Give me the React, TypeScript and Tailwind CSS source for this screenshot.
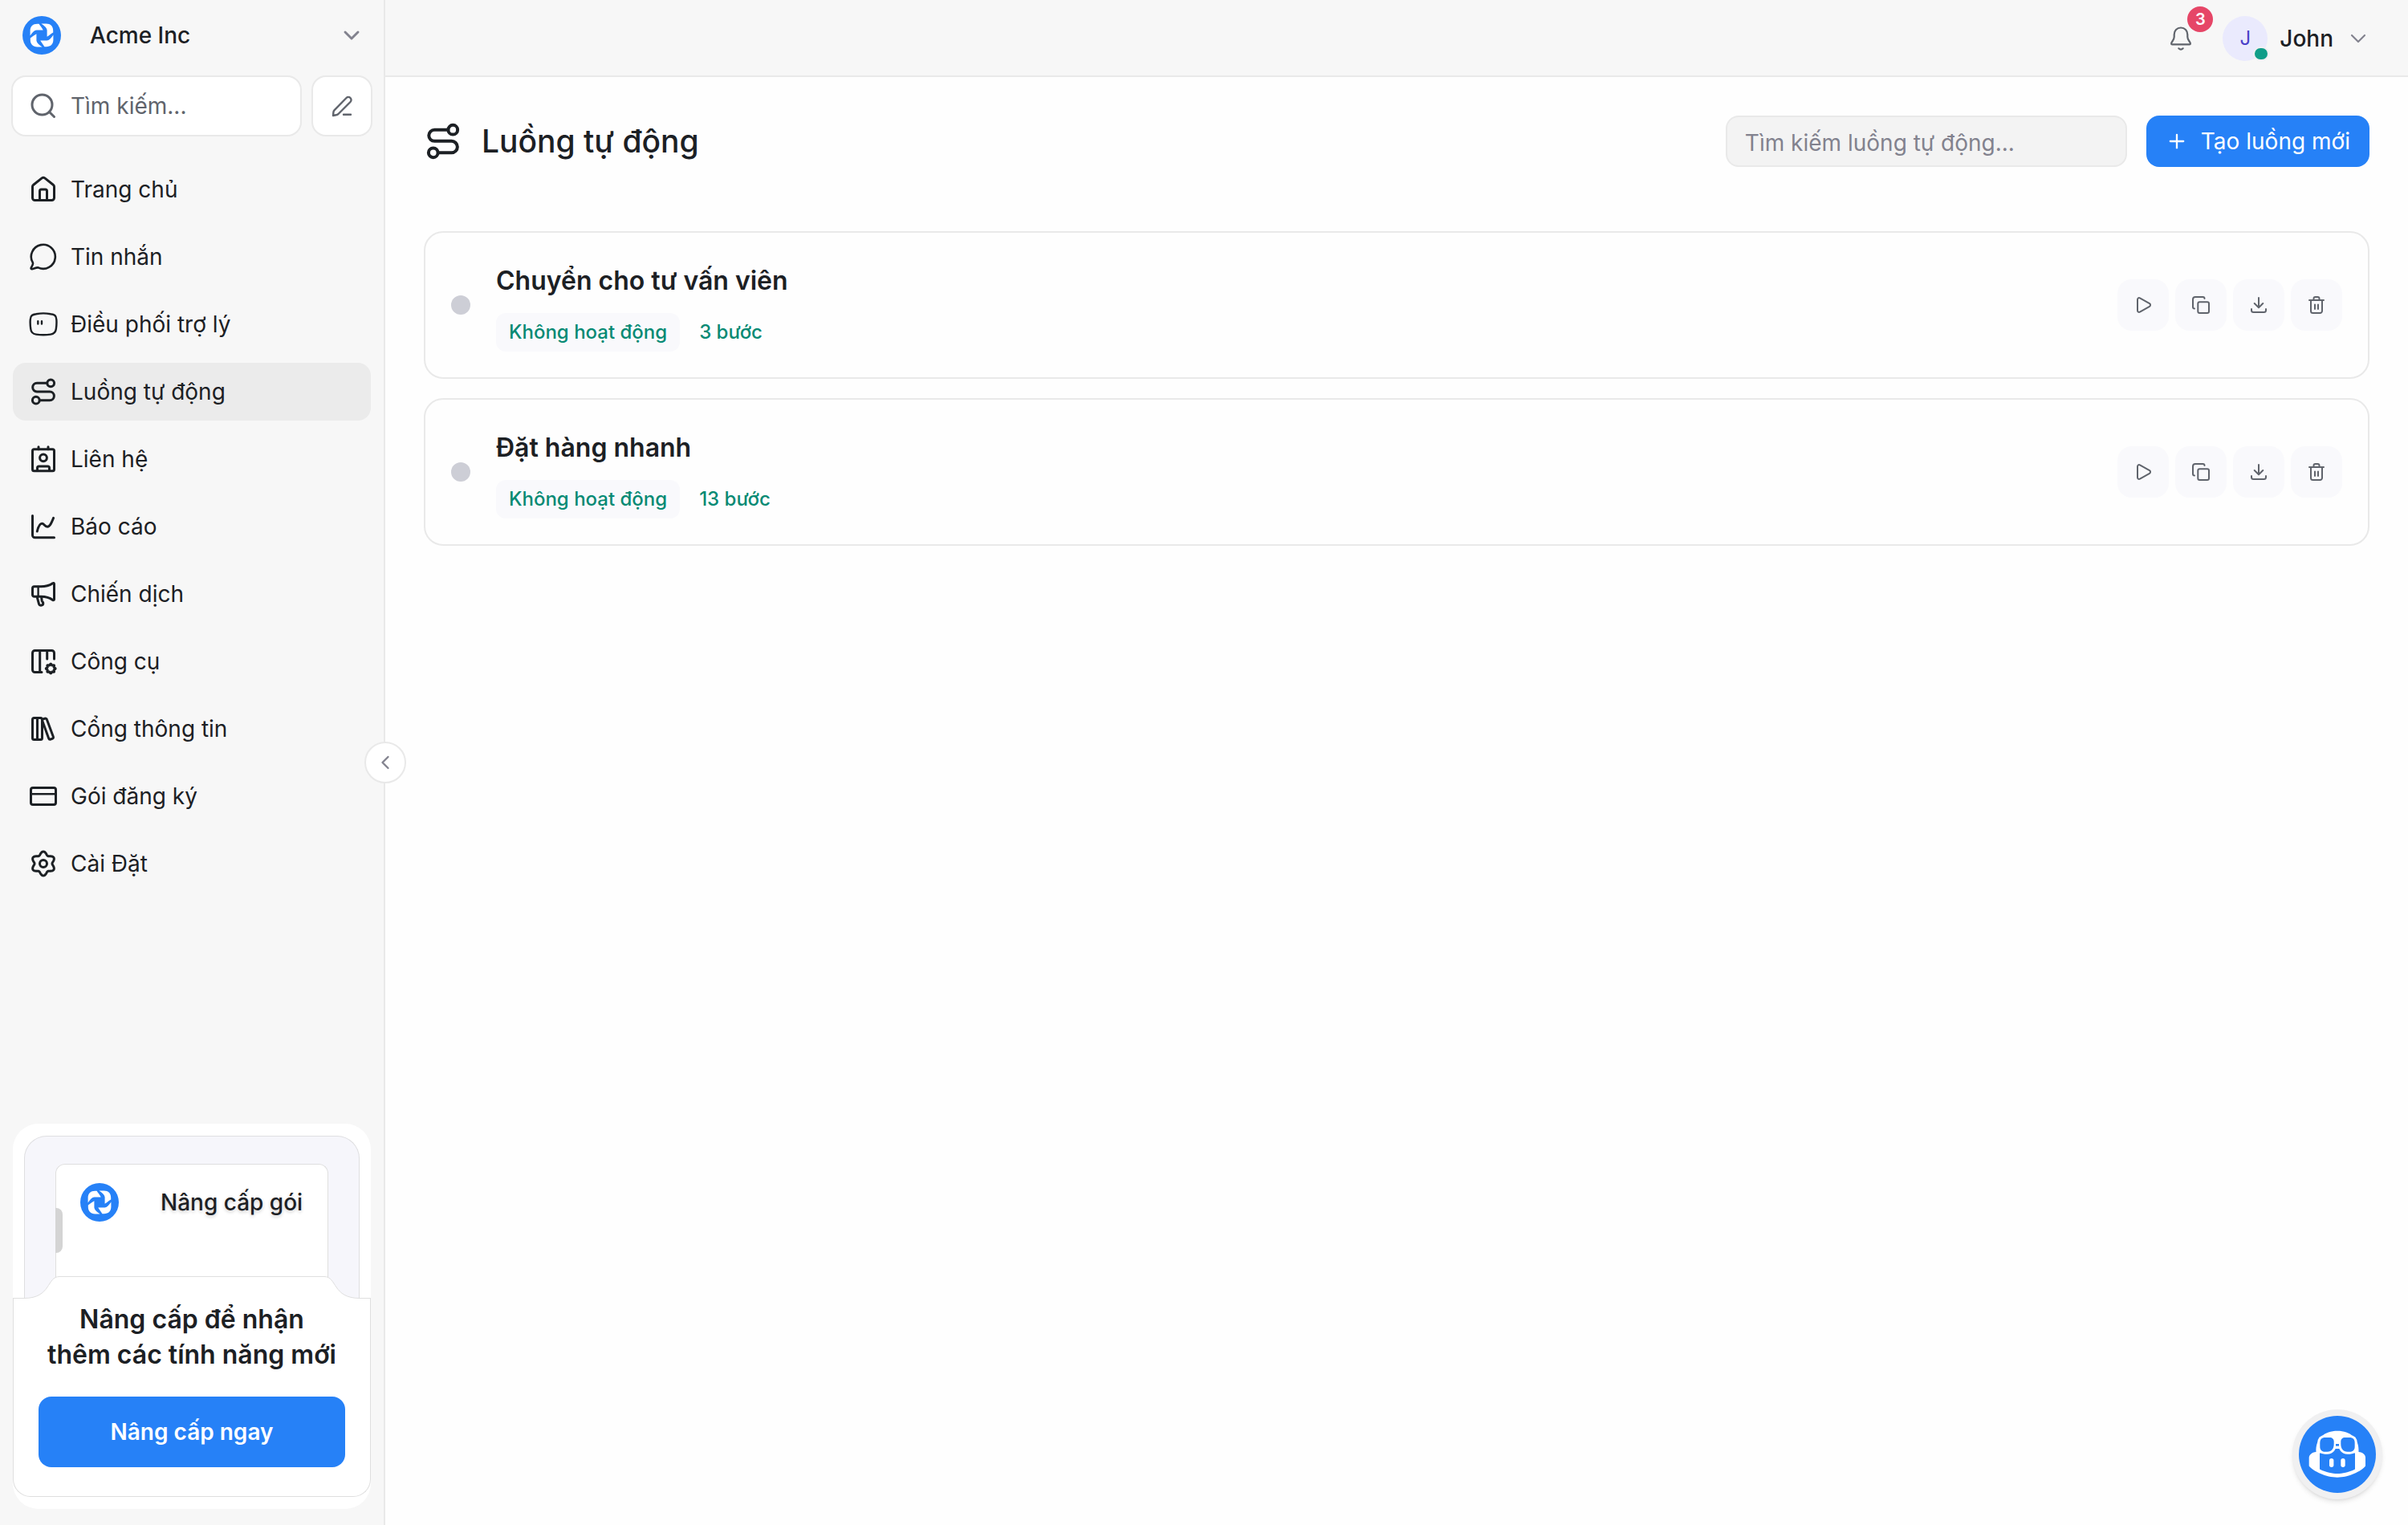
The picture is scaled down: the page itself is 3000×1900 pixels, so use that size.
import type { ReactNode } from "react";
import { ChevronDown, ChevronLeft, Plus } from "lucide-react";

// closed polar curve with n rounded teeth, used for the gear icons
function gearPath(cx: number, cy: number, r: number, amp: number, n: number) {
  const pts: string[] = [];
  for (let i = 0; i < 120; i++) {
    const a = (i / 120) * Math.PI * 2 - Math.PI / 2;
    const rr = r + amp * Math.cos(n * (a + Math.PI / 2));
    pts.push((cx + rr * Math.cos(a)).toFixed(2) + " " + (cy + rr * Math.sin(a)).toFixed(2));
  }
  return "M" + pts.join("L") + "Z";
}

function NavIcon({ children, className = "size-9" }: { children: ReactNode; className?: string }) {
  return (
    <svg viewBox="0 0 36 36" className={className + " shrink-0"} fill="none" stroke="currentColor" strokeWidth="3" strokeLinecap="round" strokeLinejoin="round" aria-hidden="true">
      {children}
    </svg>
  );
}

function ActionIcon({ children }: { children: ReactNode }) {
  return (
    <svg viewBox="0 0 28 28" className="size-7" fill="none" stroke="currentColor" strokeWidth="2" strokeLinecap="round" strokeLinejoin="round" aria-hidden="true">
      {children}
    </svg>
  );
}

const routeShape = (
  <>
    <circle cx="27.2" cy="7.3" r="4.4" />
    <circle cx="8.8" cy="28.7" r="4.4" />
    <path d="M22.7 7.3H10a5.25 5.25 0 0 0 0 10.6h16a5.4 5.4 0 0 1 0 10.8H13.4" />
  </>
);

const nav = [
  {
    label: "Trang chủ",
    icon: (
      <>
        <path d="M4.5 14.5a3 3 0 0 1 1.2-2.3L16.2 3.9a3 3 0 0 1 3.6 0l10.5 8.3a3 3 0 0 1 1.2 2.3v14a3 3 0 0 1-3 3h-21a3 3 0 0 1-3-3Z" />
        <path d="M13.5 31.5V20a2 2 0 0 1 2-2h5a2 2 0 0 1 2 2v11.5" />
      </>
    ),
  },
  {
    label: "Tin nhắn",
    icon: <path strokeWidth="2.6" d="M4.9 25.4A15 15 0 1 1 11.5 31.4C9 31.2 6 32.8 3.8 33.2C2.9 33.3 2.4 32.5 2.8 31.6C3.7 29.7 5.6 27.5 4.9 25.4Z" />,
  },
  {
    label: "Điều phối trợ lý",
    icon: (
      <g strokeWidth="2.4">
        <path d="M9 5.3C14 4.3 22 4.3 27 5.3C32 6 34 7 34.3 12C34.6 15 34.4 20 33.8 24C33.3 28.3 31 30 27 30.6C22 31.4 14 31.4 9 30.6C5 30 2.7 28.3 2.3 24C1.7 20 1.5 15 1.8 12C2.1 7 4.3 6 9 5.3Z" />
        <path d="M11.3 14.2v3.4M16 14.2v3.4" />
      </g>
    ),
  },
  { label: "Luồng tự động", icon: routeShape, active: true },
  {
    label: "Liên hệ",
    icon: (
      <>
        <rect x="4.5" y="5.8" width="27" height="27" rx="2" />
        <path d="M12 2.8v3M24 2.8v3M10.5 32.5V29a2 2 0 0 1 2-2h11a2 2 0 0 1 2 2v3.5" />
        <circle cx="18" cy="16.3" r="4.4" />
      </>
    ),
  },
  {
    label: "Báo cáo",
    icon: (
      <>
        <path d="M4.5 4.5v24.2a3 3 0 0 0 3 3h24" />
        <path d="M10.3 24C11.5 19 13.5 14.3 16.3 14.3C19 14.3 19.5 18.3 23 18.3C26.5 18.3 28.5 12.5 30.6 7.4" />
      </>
    ),
  },
  {
    label: "Chiến dịch",
    icon: (
      <>
        <path d="M6.8 8.8H15c7 0 11-1.6 14.6-4.1c.9-.6 1.9-.2 1.9.8v19.2c0 1-1 1.4-1.9.8C26 22.7 22 21.3 15 21.3H6.8a2.3 2.3 0 0 1-2.3-2.3v-7.9a2.3 2.3 0 0 1 2.3-2.3Z" />
        <path strokeWidth="2.4" d="M11.6 9v12" />
        <path d="M10.2 21.8l2.3 8.6a2.7 2.7 0 0 0 5.2-1.4c-.3-1-1.4-1.6-1.6-2.8l-.5-4.6" />
      </>
    ),
  },
  {
    label: "Công cụ",
    icon: (
      <>
        <path d="M16 31.5H7.5a3 3 0 0 1-3-3v-21a3 3 0 0 1 3-3h21a3 3 0 0 1 3 3V15M13.7 4.8v26.5M22.7 4.8V15" />
        <path strokeWidth="2.8" d={gearPath(27.2, 27, 5.1, 0.9, 8)} />
      </>
    ),
  },
  {
    label: "Cổng thông tin",
    icon: (
      <>
        <path d="M6.5 4.5h8a2 2 0 0 1 2 2v23a2 2 0 0 1-2 2h-8a2 2 0 0 1-2-2v-23a2 2 0 0 1 2-2ZM10.5 4.8v26.5" />
        <path d="M16.8 8.2a2 2 0 0 1 1.4-2.5l1.6-.5a2 2 0 0 1 2.6 1.3l7.9 21.3a2 2 0 0 1-1.2 2.5l-2 .7a2 2 0 0 1-2.5-1.3Z" />
      </>
    ),
  },
  {
    label: "Gói đăng ký",
    icon: (
      <>
        <rect x="2.5" y="7.5" width="31" height="21" rx="2.5" />
        <path strokeWidth="2.4" d="M2.5 15.2h31" />
      </>
    ),
  },
  {
    label: "Cài Đặt",
    icon: (
      <>
        <path d={gearPath(18, 18, 13, 2, 6)} />
        <circle cx="18" cy="18" r="4.5" />
      </>
    ),
  },
];

const actions = [
  { label: "Chạy", icon: <path d="M7 7.2v13.6c0 1.8 1.6 2.7 3 1.9l12-6.9c1.4-.8 1.4-2.8 0-3.6L10 5.3C8.6 4.5 7 5.4 7 7.2Z" /> },
  {
    label: "Sao chép",
    icon: (
      <>
        <rect x="10.3" y="10.3" width="13.7" height="13.7" rx="2" />
        <path d="M18.5 6a2 2 0 0 0-2-2H7a3 3 0 0 0-3 3v9.5a2 2 0 0 0 2 2" />
      </>
    ),
  },
  { label: "Tải xuống", icon: <path d="M14 5v12M8.7 12l5.3 5.2 5.3-5.2M5 19v1.5A2.5 2.5 0 0 0 7.5 23h13a2.5 2.5 0 0 0 2.5-2.5V19" /> },
  { label: "Xóa", icon: <path d="M5 8h18M10.5 8V6a2 2 0 0 1 2-2h3a2 2 0 0 1 2 2v2M7 8v13.5A2.5 2.5 0 0 0 9.5 24h9a2.5 2.5 0 0 0 2.5-2.5V8M12 13.5V19M16 13.5V19" /> },
];

const flows = [
  { name: "Chuyển cho tư vấn viên", steps: 3 },
  { name: "Đặt hàng nhanh", steps: 13 },
];

function Logo() {
  const petal = "M9.6 24.6V18.5C9.6 13 13 9.8 18.3 9.8H20.6C22 12.2 23.7 13.8 25.8 17.4H17.6C14.8 17.6 12.2 20.4 9.6 24.6Z";
  return (
    <svg viewBox="0 0 48 48" className="size-12 shrink-0" aria-hidden="true">
      <circle cx="24" cy="24" r="24" fill="#2681f7" />
      <g fill="#fff">
        <path d={petal} />
        <path d={petal} transform="rotate(90 24 24)" />
        <path d={petal} transform="rotate(180 24 24)" />
        <path d={petal} transform="rotate(270 24 24)" />
      </g>
    </svg>
  );
}

function Mascot() {
  const lens = "M33 27h5.5c3 0 5.2 2 5.2 5v3c0 6-3 9.7-8.2 9.7h-3c-4 0-6.2-2.5-6.2-6.5V34c0-4.5 2-7 6.7-7Z";
  return (
    <svg viewBox="0 0 96 96" className="size-24" aria-hidden="true">
      <circle cx="48" cy="48" r="48" fill="#2681f7" />
      <path fill="#fff" d="M21.5 45C20.5 28 32 18.7 48 18.7S75.5 28 74.5 45C80 45.5 83 48.5 83 52V62.5C78 69 62 76.7 48 76.7S18 69 12.7 62.5V52C13 48.5 16 45.5 21.5 45Z" />
      <path fill="#2681f7" d="M26 46.5L40 46L45 41H51L56 46L70 46.5V66.5C62 70.5 54 72 48 72S34 70.5 26 66.5Z" />
      <g fill="#2681f7" stroke="#fff" strokeWidth="6" style={{ paintOrder: "stroke" }}>
        <path d={lens} />
        <path d={lens} transform="matrix(-1 0 0 1 96 0)" />
      </g>
      <rect x="46" y="35" width="4" height="2.6" fill="#2681f7" />
      <rect x="38" y="53" width="5.4" height="11" rx="2.7" fill="#fff" />
      <rect x="52.3" y="53" width="5.4" height="11" rx="2.7" fill="#fff" />
    </svg>
  );
}

function UpgradeCard() {
  return (
    <section className="mx-4 mb-5 mt-auto rounded-[32px] bg-white py-[15px]">
      <div className="mx-[14px] h-[202px] rounded-t-[28px] border border-b-0 border-[#dfdfe1] bg-[#f6f6fb] px-[38px] pt-[34px]">
        <div className="relative flex h-full items-start gap-[52px] rounded-t-xl border border-b-0 border-[#dfdfdf] bg-white pl-[30px] pt-[23px]">
          <span className="absolute -left-px top-[54px] h-14 w-[9px] rounded-r-lg bg-[#d4d4d4]" />
          <Logo />
          <span className="pt-1 text-[28px] font-medium leading-10 whitespace-nowrap [text-shadow:0_2px_4px_rgba(0,0,0,0.2)]">Nâng cấp gói</span>
        </div>
      </div>
      <svg viewBox="0 0 446 28" className="relative -mt-[27px] block w-full" fill="#fff" stroke="#dfdfdf" aria-hidden="true">
        <path stroke="none" d="M0 28V27.5H14C48 27.5 42 .5 58 .5H388C404 .5 398 27.5 432 27.5H446V28Z" />
        <path fill="none" d="M0 27.5H14C48 27.5 42 .5 58 .5H388C404 .5 398 27.5 432 27.5H446" />
      </svg>
      <div className="relative rounded-b-[22px] border border-t-0 border-[#dfdfdf] bg-white px-[31px] pb-9 pt-1">
        <h2 className="text-center text-[32px] font-semibold leading-[44px] whitespace-nowrap">
          Nâng cấp để nhận
          <br />
          thêm các tính năng mới
        </h2>
        <button type="button" className="mt-[30px] h-[88px] w-full rounded-2xl bg-[#2681f7] text-[28px] font-semibold text-white">
          Nâng cấp ngay
        </button>
      </div>
    </section>
  );
}

function Sidebar() {
  return (
    <aside className="relative flex w-[480px] shrink-0 flex-col border-r-2 border-[#e9e9e9] bg-[#f7f7f7]">
      <button type="button" className="flex h-[94px] items-center pb-1.5 pl-7 pr-6 pt-0">
        <Logo />
        <span className="ml-9 flex-1 text-left text-[28px] font-medium">Acme Inc</span>
        <ChevronDown className="size-8 text-[#82828e]" strokeWidth={2.2} />
      </button>

      <div className="flex gap-3 px-[14px]">
        <label className="flex h-[76px] min-w-0 flex-1 items-center gap-4 rounded-[18px] border-2 border-[#e9e9e9] bg-white pl-5 text-[#60646c]">
          <NavIcon>
            <circle cx="16.5" cy="16.5" r="12.5" />
            <path d="M25.5 25.5l6 6" />
          </NavIcon>
          <input type="search" aria-label="Tìm kiếm" placeholder="Tìm kiếm..." className="w-full min-w-0 bg-transparent text-[28px] outline-none placeholder:text-[#60646c]" />
        </label>
        <button type="button" aria-label="Soạn tin" className="flex size-[76px] items-center justify-center rounded-[18px] border-2 border-[#e9e9e9] bg-white text-[#60646c]">
          <svg viewBox="0 0 28 28" className="size-7" fill="none" stroke="currentColor" strokeWidth="2.4" strokeLinecap="round" strokeLinejoin="round">
            <path d="M3 26l.4-4.2c.1-1 .6-2 1.3-2.7L19.5 4a3.4 3.4 0 0 1 5 5L9.500 24c-.8.7-1.7 1.2-2.7 1.3ZM16 24.7h9" />
          </svg>
        </button>
      </div>

      <nav className="mt-[30px] flex flex-col gap-3 px-4">
        {nav.map((item) => (
          <a
            key={item.label}
            href="#"
            className={"flex h-[72px] items-center gap-4 rounded-2xl pl-5 text-[28px] " + (item.active ? "bg-[#ebebeb]" : "")}
          >
            <NavIcon>{item.icon}</NavIcon>
            {item.label}
          </a>
        ))}
      </nav>

      <UpgradeCard />

      <button type="button" aria-label="Thu gọn" className="absolute -right-7 top-1/2 z-10 flex size-[52px] -translate-y-1/2 items-center justify-center rounded-full border-2 border-[#e9e9e9] bg-white text-[#82828e]">
        <ChevronLeft className="size-7" strokeWidth={2} />
      </button>
    </aside>
  );
}

function TopBar() {
  return (
    <header className="flex h-24 items-center justify-end border-b-2 border-[#e9e9e9] bg-[#f7f7f7] pr-[46px] pt-0.5">
      <button type="button" aria-label="Thông báo" className="relative mr-[34px] text-[#60646c]">
        <svg viewBox="0 0 36 36" className="size-9" fill="none" stroke="currentColor" strokeWidth="2.2" strokeLinecap="round" strokeLinejoin="round">
          <path d="M18 4.5c-5 0-8.3 3.8-8.3 8.5v3c0 4-3.6 6.200-3.6 8.2c0 .7.5 1.1 1.2 1.1h21.4c.7 0 1.2-.4 1.2-1.1c0-2-3.6-4.2-3.6-8.2v-3c0-4.7-3.3-8.5-8.3-8.5Z" />
          <path d="M15.3 30.3q2.7 2.6 5.4 0" />
        </svg>
        <span className="absolute -right-[22px] -top-[22px] flex size-8 items-center justify-center rounded-full bg-[#e64667] text-[20px] font-semibold text-white">3</span>
      </button>
      <button type="button" className="flex items-center">
        <span className="relative flex size-14 items-center justify-center rounded-full bg-[#eaeafd] text-[24px] text-[#4a40c8]">
          J
          <span className="absolute -right-0.5 bottom-0 h-[18px] w-5 rounded-full border-2 border-[#f0f0f3] bg-[#0f9d89]" />
        </span>
        <span className="mx-[15px] text-[28px] font-medium">John</span>
        <ChevronDown className="size-8 text-[#82828e]" strokeWidth={1.6} />
      </button>
    </header>
  );
}

export default function App() {
  return (
    <div className="flex min-h-screen bg-[#fefefe] font-['Inter',sans-serif] text-[#1c2024]">
      <Sidebar />
      <div className="flex min-w-0 flex-1 flex-col">
        <TopBar />
        <main className="px-12 pt-12">
          <div className="flex h-16 items-center">
            <NavIcon className="size-12">{routeShape}</NavIcon>
            <h1 className="ml-6 flex-1 text-[39px] font-medium leading-[48px]">Luồng tự động</h1>
            <input
              type="search"
              aria-label="Tìm kiếm luồng tự động"
              placeholder="Tìm kiếm luồng tự động..."
              className="h-16 w-[500px] rounded-2xl border-2 border-[#e9e9e9] bg-[#f3f3f3] px-[22px] pt-1 text-[28px] outline-none placeholder:text-[#82828e]"
            />
            <button type="button" className="ml-6 flex h-16 items-center gap-4 rounded-2xl bg-[#2681f7] px-6 text-[28px] text-white">
              <Plus className="size-7" strokeWidth={2} />
              Tạo luồng mới
            </button>
          </div>

          <ul className="mt-20 flex flex-col gap-6">
            {flows.map((flow) => (
              <li key={flow.name} className="flex h-[184px] items-center rounded-3xl border-2 border-[#e9e9e9] px-8">
                <span className="size-6 rounded-full bg-[#cdced6]" />
                <div className="ml-8 flex-1 pt-1">
                  <h3 className="text-[32px] font-semibold leading-[48px]">{flow.name}</h3>
                  <div className="mt-4 flex items-center gap-6 text-[24px] font-medium leading-8 text-[#078a74]">
                    <span className="rounded-xl bg-[#f9f9fc] px-4 py-2">Không hoạt động</span>
                    <span>{flow.steps} bước</span>
                  </div>
                </div>
                <div className="flex gap-2">
                  {actions.map((action) => (
                    <button key={action.label} type="button" aria-label={action.label} className="flex size-16 items-center justify-center rounded-[18px] bg-[#f9f9fc] text-[#60646c]">
                      <ActionIcon>{action.icon}</ActionIcon>
                    </button>
                  ))}
                </div>
              </li>
            ))}
          </ul>
        </main>
      </div>

      <button type="button" aria-label="Trợ lý" className="fixed bottom-8 right-8 rounded-full bg-[#f0f0f1] p-2 shadow-md">
        <Mascot />
      </button>
    </div>
  );
}
